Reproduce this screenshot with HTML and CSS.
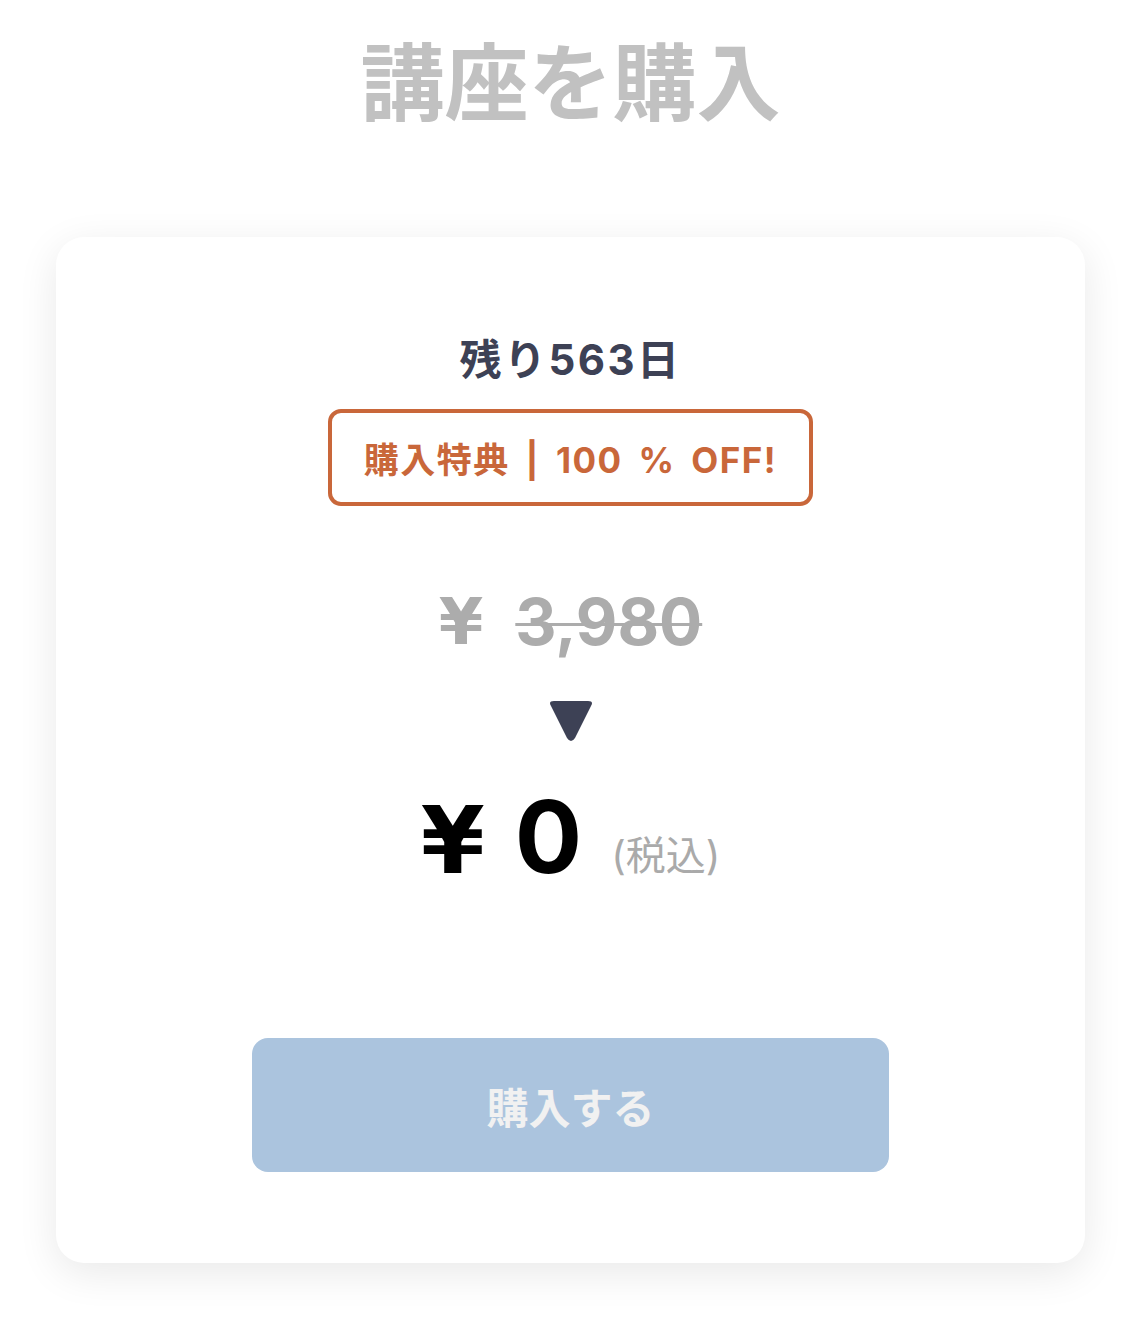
FILE: index.html
```html
<!DOCTYPE html>
<html lang="ja">
<head>
    <meta charset="UTF-8">
    <meta name="viewport" content="width=device-width, initial-scale=1.0">
    <title>講座を購入</title>
    <link rel="stylesheet" href="styles.css">
</head>
<body>
    <div class="page">
        <h1 class="title">講座を購入</h1>

        <div class="card">
            <p class="remaining">残り563日</p>

            <div class="perk">購入特典 | 100 % OFF!</div>

            <p class="old-price">
                <span class="yen">¥</span>
                <span class="old-amount">3,980</span>
            </p>

            <div class="arrow">
                <svg width="46" height="42" viewBox="0 0 46 42">
                    <path d="M6 1 H40 Q46 1 43 6 L27 38 Q23 44 19 38 L3 6 Q0 1 6 1 Z" fill="#3d4155"/>
                </svg>
            </div>

            <p class="new-price">
                <span class="yen new-yen">¥</span>
                <span class="new-amount">0</span>
                <span class="tax">(税込)</span>
            </p>

            <button class="buy-btn" disabled>購入する</button>
        </div>
    </div>
</body>
</html>
```

FILE: styles.css
```css
body {
    margin: 0;
    background-color: #fff;
    font-family: "Inter", "Noto Sans CJK JP", sans-serif;
}

.page {
    padding: 20px 38px 75px 56px;
}

.title {
    margin: 0;
    text-align: center;
    font-family: "Noto Sans CJK JP", sans-serif;
    font-size: 84px;
    font-weight: 700;
    color: #c1c1c1;
    line-height: 116px;
}

.card {
    margin-top: 101px;
    width: 1029px;
    background-color: #fff;
    border-radius: 28px;
    box-shadow: 0 10px 40px rgba(0, 0, 0, 0.09);
    display: flex;
    flex-direction: column;
    align-items: center;
    padding: 95px 0 91px;
    box-sizing: border-box;
}

.remaining {
    margin: 0;
    font-size: 42px;
    font-weight: 700;
    color: #3d4155;
    line-height: 56px;
    letter-spacing: 2.5px;
}

.perk {
    margin-top: 21px;
    width: 485px;
    height: 97px;
    box-sizing: border-box;
    border: 4px solid #c9673a;
    border-radius: 13px;
    color: #c9673a;
    font-size: 35px;
    font-weight: 700;
    letter-spacing: 1.5px;
    word-spacing: 6px;
    display: flex;
    align-items: center;
    justify-content: center;
}

.old-price {
    margin: 78px 0 0;
    color: #acacac;
    font-weight: 700;
    font-size: 64px;
    line-height: 76px;
    display: flex;
    align-items: center;
    gap: 32px;
}

.yen {
    font-family: "DejaVu Sans", sans-serif;
}

.old-amount {
    text-decoration: line-through;
    text-decoration-thickness: 3px;
}

.arrow {
    margin-top: 40px;
    height: 42px;
    display: flex;
}

.new-price {
    margin: 45px 0 0;
    display: flex;
    align-items: baseline;
    color: #000;
    font-weight: 700;
}

.new-price span {
    line-height: 1;
}

.new-yen {
    font-size: 92px;
}

.new-amount {
    font-size: 100px;
    margin-left: 30px;
}

.tax {
    font-size: 40px;
    font-weight: 400;
    color: #aaa;
    margin-left: 29px;
    position: relative;
    top: -3px;
}

.buy-btn {
    margin-top: 150px;
    width: 637px;
    height: 134px;
    border: none;
    border-radius: 16px;
    background-color: #abc4de;
    color: #f1f1f1;
    font-family: inherit;
    font-size: 42px;
    font-weight: 700;
}
```
